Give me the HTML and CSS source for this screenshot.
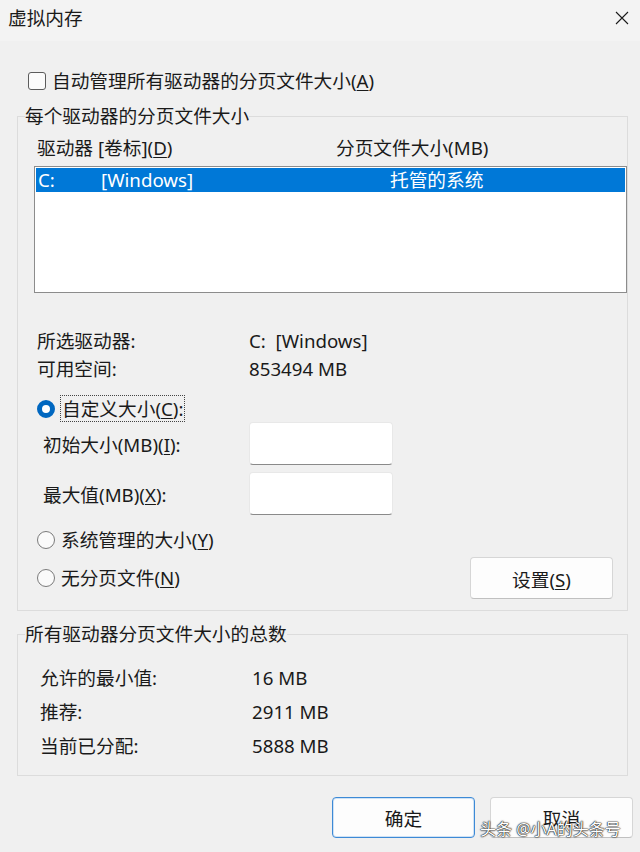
FILE: index.html
```html
<!DOCTYPE html>
<html lang='zh-CN'>
<head>
<meta charset='UTF-8'>
<meta name='viewport' content='width=device-width, initial-scale=1.0'>
<title>虚拟内存</title>
<link rel="stylesheet" href="styles.css">
</head>
<body>
  <div class='window'>
    <!-- ---------- TITLE BAR ---------- -->
    <header class='titlebar'>
      <span class='title'>虚拟内存</span>
      <svg class='close' width='14' height='14' viewBox='0 0 14 14'><path d='M1 1L13 13M13 1L1 13'/></svg>
    </header>

    <main class='dlg'>
      <label class='check-row'>
        <span class='checkbox'></span>
        <span>自动管理所有驱动器的分页文件大小(<u>A</u>)</span>
      </label>

      <!-- ---------- PER DRIVE ---------- -->
      <fieldset class='group group-drive'>
        <legend>每个驱动器的分页文件大小</legend>
        <div class='list-head'>
          <span class='col-drive'>驱动器 [卷标](<u>D</u>)</span>
          <span>分页文件大小(MB)</span>
        </div>
        <div class='listbox'>
          <div class='list-item selected'>
            <span class='c-letter'>C:</span>
            <span class='c-label'>[Windows]</span>
            <span class='c-size'>托管的系统</span>
          </div>
        </div>

        <div class='info'>
          <div class='info-row'><span class='info-key'>所选驱动器:</span><span class='pre'>C:  [Windows]</span></div>
          <div class='info-row'><span class='info-key'>可用空间:</span><span>853494 MB</span></div>
        </div>

        <div class='radio-row custom'>
          <span class='radio on'></span>
          <span class='focus'>自定义大小(<u>C</u>):</span>
        </div>
        <div class='size-row'>
          <span class='size-key'>初始大小(MB)(<u>I</u>):</span>
          <input class='size-input' type='text'>
        </div>
        <div class='size-row second'>
          <span class='size-key'>最大值(MB)(<u>X</u>):</span>
          <input class='size-input' type='text'>
        </div>

        <div class='radio-row sys'>
          <span class='radio'></span>
          <span>系统管理的大小(<u>Y</u>)</span>
        </div>
        <div class='last-row'>
          <div class='radio-row'>
            <span class='radio'></span>
            <span>无分页文件(<u>N</u>)</span>
          </div>
          <button class='btn set-btn'>设置(<u>S</u>)</button>
        </div>
      </fieldset>

      <!-- ---------- TOTALS ---------- -->
      <fieldset class='group group-total'>
        <legend>所有驱动器分页文件大小的总数</legend>
        <div class='total-row'><span class='total-key'>允许的最小值:</span><span>16 MB</span></div>
        <div class='total-row'><span class='total-key'>推荐:</span><span>2911 MB</span></div>
        <div class='total-row'><span class='total-key'>当前已分配:</span><span>5888 MB</span></div>
      </fieldset>

      <div class='footer'>
        <button class='btn default'>确定</button>
        <button class='btn'>取消</button>
      </div>
    </main>

    <span class='watermark'>头条 @小A的头条号</span>
  </div>
</body>
</html>
```

FILE: styles.css
```css
/* ---------- BASE ---------- */
*{box-sizing:border-box;}
body{
  margin:0;background:#f0f0f0;color:#1a1a1a;
  font-family:"Noto Sans","Noto Sans CJK SC",sans-serif;font-size:18.7px;
}
u{text-underline-offset:2px;text-decoration-thickness:1px;}
.window{position:relative;width:640px;height:852px;overflow:hidden;background:#f0f0f0;}
.pre{white-space:pre;}

/* ---------- TITLE BAR ---------- */
.titlebar{
  height:41px;padding:0 11px 5px 8px;background:#f3f3f3;
  display:flex;align-items:center;justify-content:space-between;
}
.title{line-height:24px;}
.close{stroke:#1a1a1a;stroke-width:1.1;fill:none;}

/* ---------- DIALOG BODY ---------- */
.dlg{display:flex;flex-direction:column;}
.check-row{
  margin-top:28px;padding-left:28px;height:24px;line-height:24px;
  display:flex;align-items:center;gap:6px;
}
.checkbox{width:18px;height:18px;border:1px solid #5c5c5c;border-radius:3px;background:#fbfbfb;}

/* Group boxes */
.group{
  margin:11px 0 0 17px;padding:0;width:611px;min-width:0;
  border:1px solid #dcdcdc;
}
.group legend{margin-left:7px;padding:0;line-height:24px;}
.group-drive{padding-bottom:11px;}

.list-head{margin-top:8px;padding-left:19px;line-height:24px;display:flex;}
.col-drive{width:299px;}
.listbox{
  margin:6px 0 0 16px;height:127px;padding:1px;
  border:1px solid #8c8c8c;background:#fff;
}
.list-item{height:24px;line-height:24px;padding-left:2px;display:flex;}
.list-item.selected{background:#0078d7;color:#fff;}
.c-letter{width:63px;}
.c-label{width:289px;}

.info{margin-top:34px;padding-left:19px;}
.info-row{height:28px;line-height:28px;display:flex;}
.info-key{width:212px;}

/* Radios */
.radio-row{padding-left:19px;display:flex;align-items:center;line-height:24px;}
.radio{
  width:18px;height:18px;border-radius:50%;
  border:1px solid #7a7a7a;background:#fafafa;margin-right:6px;
}
.radio.on{border:5px solid #0067c0;background:#fff;}
.custom{margin-top:12px;height:27px;}
.focus{border:1px dotted #444;padding:0 1px;line-height:25px;margin-left:-1px;}
.sys{margin-top:13px;height:24px;}

.size-row{display:flex;align-items:center;padding-left:25px;height:43px;}
.size-row.second{margin-top:7px;}
.size-key{width:206px;}
.size-input{
  width:144px;height:43px;background:#fff;
  border:1px solid #e8e8e8;border-bottom-color:#8a8a8a;border-radius:4px;
}

.last-row{margin-top:5px;display:flex;align-items:center;justify-content:space-between;padding-right:14px;}

/* Buttons */
.btn{
  width:143px;height:42px;font:inherit;color:#1a1a1a;cursor:pointer;
  background:#fdfdfd;border:1px solid #d6d6d6;border-bottom-color:#c0c0c0;border-radius:4px;
}
.btn.default{border-color:#3d8ad6;box-shadow:inset 0 0 0 1px #cfe2f5;}

/* Totals */
.group-total{padding:15px 0 12px 0;}
.total-row{height:34px;line-height:34px;display:flex;padding-left:22px;}
.total-key{width:212px;}

.footer{margin-top:21px;padding-right:7px;display:flex;justify-content:flex-end;gap:15px;}
.footer .btn{height:41px;}

/* Overlay watermark */
.watermark{
  position:absolute;left:480px;top:817px;
  font-size:16px;line-height:24px;color:#fff;
  text-shadow:0 0 1px #111,0 0 1px #111,0 0 2px rgba(0,0,0,.8);
}
```
